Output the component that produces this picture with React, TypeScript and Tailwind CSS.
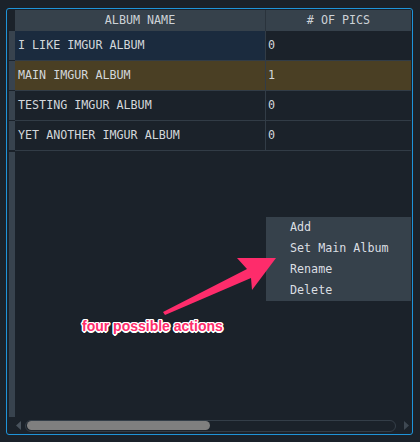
import React from "react";

const rows = [
  { name: "I LIKE IMGUR ALBUM", pics: "0", kind: "sel" },
  { name: "MAIN IMGUR ALBUM", pics: "1", kind: "main" },
  { name: "TESTING IMGUR ALBUM", pics: "0", kind: "" },
  { name: "YET ANOTHER IMGUR ALBUM", pics: "0", kind: "" },
];

export default function App() {
  const mono = { fontFamily: '"DejaVu Sans Mono", "Liberation Mono", monospace' };
  return (
    <div className="relative w-[420px] h-[442px] bg-[#1b222a] pt-[8px] pl-[6px] overflow-hidden" style={mono}>
      <div className="w-[407px] h-[427px] border border-[#1f94d9] rounded-[3px] flex flex-col pt-[1px] text-[11.7px] text-[#d3d7db]">
        {/* header */}
        <div className="flex h-[21px] shrink-0">
          <div className="w-[8px]" />
          <div className="w-[250px] bg-[#36414b] flex items-center justify-center text-[#cdd2d7]">ALBUM NAME</div>
          <div className="w-[146px] bg-[#36414b] border-l border-[#2a333c] flex items-center justify-center text-[#cdd2d7]">
            # OF PICS
          </div>
        </div>
        {/* rows */}
        {rows.map((r) => (
          <div key={r.name} className="flex h-[30px] shrink-0">
            <div className="w-[8px] pl-[2px] border-b border-[#1b222a]">
              <div className="w-[6px] h-full bg-[#38434e]" />
            </div>
            <div
              className={`w-[250px] flex items-center pl-[3px] border-b border-[#323c46] ${
                r.kind === "sel" ? "bg-[#1b2b3e]" : r.kind === "main" ? "bg-[#4a3f24]" : ""
              }`}
            >
              {r.name}
            </div>
            <div
              className={`w-[146px] flex items-center pl-[2px] border-b border-l border-[#323c46] ${
                r.kind === "main" ? "bg-[#4a3f24]" : ""
              }`}
            >
              {r.pics}
            </div>
          </div>
        ))}
        {/* filler */}
        <div className="flex flex-1 min-h-0">
          <div className="w-[8px] pl-[2px] pt-[1px]">
            <div className="w-[6px] h-full bg-[#38434e]" />
          </div>
        </div>
        {/* horizontal scrollbar */}
        <div className="h-[17px] shrink-0 flex items-center pl-[8px]">
          <svg width="6" height="9" viewBox="0 0 6 9" className="ml-[1px]">
            <polygon points="5,0 5,9 0,4.5" fill="#48525c" />
          </svg>
          <div className="ml-[3px] w-[371px] h-[12px] rounded-full border border-[#343e48] p-[1px] flex items-center">
            <div className="w-[183px] h-[9px] rounded-full bg-[#7f7f7f]" />
          </div>
          <svg width="5" height="9" viewBox="0 0 5 9" className="ml-[8px]">
            <polygon points="0,0 0,9 5,4.5" fill="#3e4852" />
          </svg>
        </div>
      </div>

      {/* context menu */}
      <div className="absolute left-[266px] top-[217px] w-[145px] h-[84px] bg-[#36414b] flex flex-col text-[11.7px] text-[#dadee2]">
        {["Add", "Set Main Album", "Rename", "Delete"].map((t) => (
          <div key={t} className="h-[21px] flex items-center pl-[24px]">
            {t}
          </div>
        ))}
      </div>

      {/* annotation arrow */}
      <svg className="absolute left-0 top-0" width="420" height="442" viewBox="0 0 420 442">
        <polygon
          points="163,312 247,269 237,258 276,258 252,290 251,278 165,315"
          fill="#fe2c6b"
        />
      </svg>
      <div
        className="absolute left-[82px] top-[317px] text-[14px] font-bold text-[#fe2c6b] leading-[18px] [text-shadow:1px_1px_0_#fff,-1px_-1px_0_#fff,1px_-1px_0_#fff,-1px_1px_0_#fff,0_1.5px_0_#fff,0_-1.5px_0_#fff,1.5px_0_0_#fff,-1.5px_0_0_#fff,0_0_3px_rgba(0,0,0,0.4)]"
        style={{ fontFamily: '"Liberation Sans", Arial, sans-serif' }}
      >
        four possible actions
      </div>
    </div>
  );
}
